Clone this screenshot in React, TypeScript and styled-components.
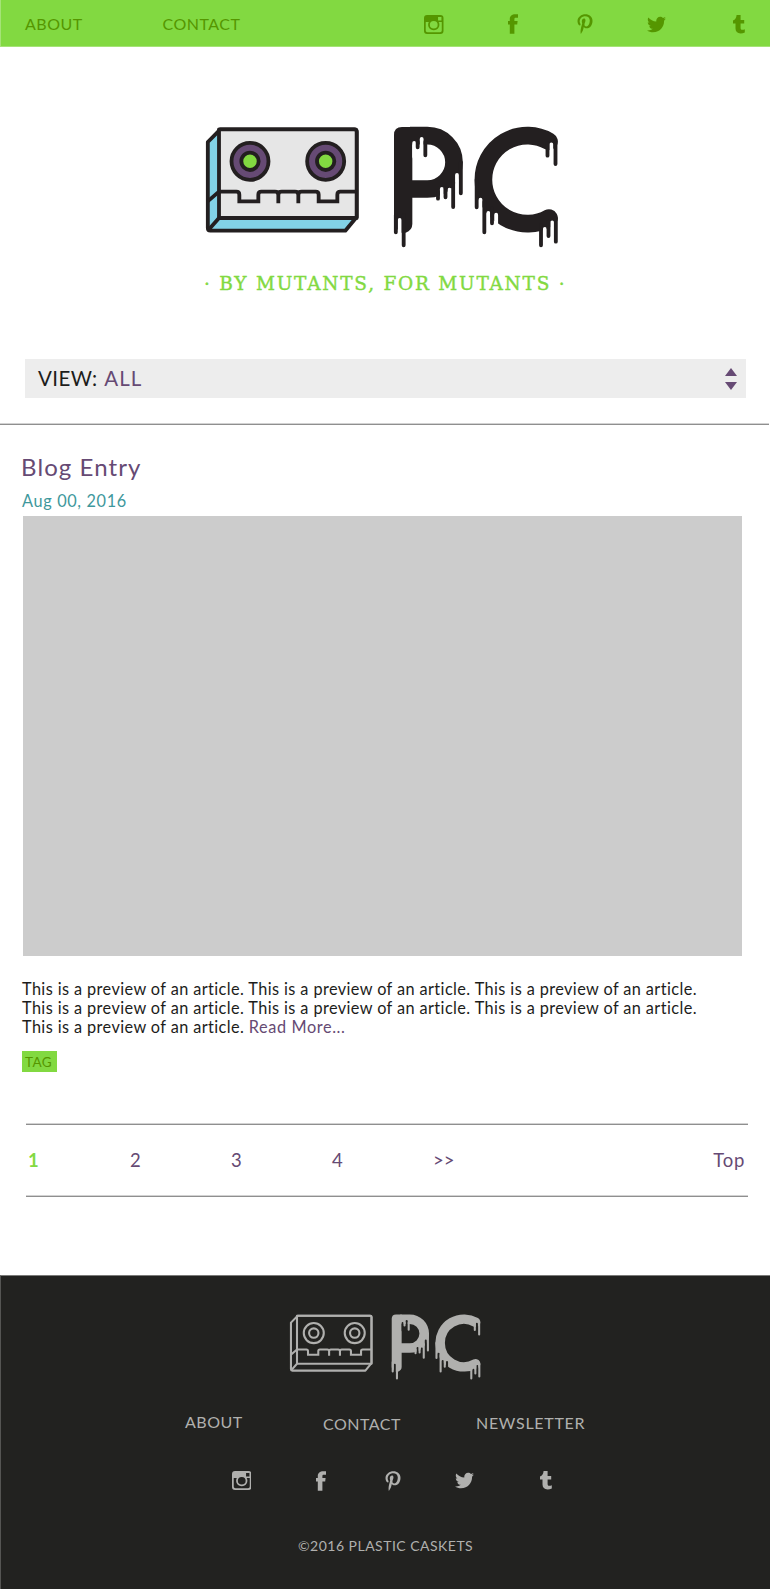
import React from "react";
import styled, { createGlobalStyle } from "styled-components";
import { FaPinterestP, FaTwitter } from "react-icons/fa";

const GlobalStyle = createGlobalStyle`
  * { box-sizing: border-box; }
  body { margin: 0; background: #fff; font-family: Lato, "Open Sans", sans-serif; color: #1d1d1b; }
  a { color: inherit; text-decoration: none; }
  p, h1, h2 { margin: 0; font-weight: 400; }
  svg { display: block; }
`;

const purple = "#664a74";
const green = "#82d941";
const leaf = "#559600";
const ink = "#231f20";
const coal = "#222220";
const ash = "#b0b0ae";

const Page = styled.div`
  width: 770px;
  height: 1589px;
  display: flex;
  flex-direction: column;
  overflow: hidden;
`;

const TopBar = styled.header`
  flex: none;
  height: 47px;
  padding: 2px 0 0 24px;
  display: flex;
  align-items: center;
  background: ${green};
  border-left: 1px solid #a5e377;
  border-bottom: 1px solid #a5e377;
  color: ${leaf};
`;

const NavLink = styled.a<{ $width: number; $drop?: number; $spacing?: number }>`
  width: ${(p) => p.$width}px;
  padding-top: ${(p) => p.$drop ?? 0}px;
  font-size: 16px;
  line-height: 20px;
  letter-spacing: ${(p) => p.$spacing ?? 0.5}px;
  white-space: nowrap;
`;

const SocialRow = styled.nav`
  display: flex;
  align-items: center;
  height: 20px;
`;

const SocialLink = styled.a<{ $gap: number }>`
  flex: none;
  margin-left: ${(p) => p.$gap}px;
`;

const Hero = styled.section`
  flex: none;
  height: 312px;
  padding: 68px 0 0 195px;
`;

const Tagline = styled.p`
  margin-top: 14px;
  margin-left: 9px;
  font-family: "DejaVu Serif", serif;
  font-size: 18.5px;
  line-height: 30px;
  letter-spacing: 1.77px;
  color: ${green};
  -webkit-text-stroke: 0.4px ${green};
  white-space: nowrap;
`;

const ViewSelect = styled.div`
  flex: none;
  width: 721px;
  height: 39px;
  margin-left: 25px;
  padding: 0 9px 0 13px;
  display: flex;
  align-items: center;
  justify-content: space-between;
  background: #ededed;
  font-size: 20.5px;
  line-height: 39px;
  letter-spacing: 0.4px;
`;

const Chosen = styled.span`
  margin-left: 1px;
  letter-spacing: 1px;
  color: ${purple};
`;

const Rule = styled.hr<{ $inset?: boolean }>`
  flex: none;
  width: ${(p) => (p.$inset ? "722px" : "769px")};
  height: 2px;
  margin: 0 0 0 ${(p) => (p.$inset ? 26 : 0)}px;
  border: 0;
  border-top: 1px solid #d2d2d2;
  background: #8f8f8f;
`;

const Article = styled.article`
  flex: none;
  height: 698px;
  padding: 26px 28px 0 22px;
`;

const Title = styled.h2`
  height: 36px;
  margin-left: -1px;
  font-size: 24px;
  line-height: 32px;
  letter-spacing: 1.1px;
  color: ${purple};
`;

const PostDate = styled.p`
  height: 29px;
  padding-top: 1px;
  font-size: 16.3px;
  line-height: 26px;
  letter-spacing: 0.65px;
  color: #3e989c;
`;

const Picture = styled.div`
  width: 719px;
  height: 440px;
  margin-left: 1px;
  background: #ccc;
`;

const Preview = styled.p`
  margin-top: 22.5px;
  font-size: 16.3px;
  line-height: 19.4px;
  letter-spacing: 0.4px;
  white-space: nowrap;
`;

const ReadMore = styled.a`
  && { color: ${purple}; }
  letter-spacing: 0.6px;
`;

const Tag = styled.span`
  display: block;
  width: 35px;
  height: 21px;
  margin-top: 14.5px;
  padding-left: 3px;
  background: ${green};
  color: ${leaf};
  font-size: 13.5px;
  line-height: 23px;
  letter-spacing: 0.4px;
`;

const Spacer = styled.div<{ $height: number }>`
  flex: none;
  height: ${(p) => p.$height}px;
`;

const Pager = styled.nav`
  flex: none;
  height: 70px;
  padding: 0 25px 0 28px;
  display: flex;
  align-items: center;
  font-size: 18.5px;
  line-height: 24px;
  color: ${purple};
`;

const PageLink = styled.a<{ $current?: boolean }>`
  width: ${(p) => (p.$current ? 102 : 101)}px;
  && { color: ${(p) => (p.$current ? green : purple)}; }
  font-weight: ${(p) => (p.$current ? 700 : 400)};
`;

const TopLink = styled.a`
  margin-left: auto;
  letter-spacing: 0.7px;
`;

const Footer = styled.footer`
  flex: 1;
  border-left: 1px solid #555553;
  border-top: 1px solid #7a7a78;
  background: ${coal};
  color: ${ash};
`;

const FooterLogo = styled.div`
  padding: 32px 0 0 283px;
`;

const FooterNav = styled.nav`
  display: flex;
  align-items: flex-start;
  height: 30px;
  margin: 28px 0 0 184px;
`;

const FooterSocial = styled.div`
  margin: 29px 0 0 231px;
`;

const Copyright = styled.p`
  margin: 43px 0 0 297px;
  font-size: 14px;
  line-height: 24px;
  letter-spacing: 0.48px;
  white-space: nowrap;
`;

/* Vertical strokes, each as [x, top, bottom]. */
type Drip = [number, number, number];

const hollows: Drip[] = [
  [102.5, 84, 125], [125, 72, 125],
  [231, 180, 275], [208.5, 224, 275], [185.5, 222, 270], [59, 315, 365],
  [514, 88, 130],
  [301.5, 254, 340], [325, 294, 350], [348.5, 299, 350],
  [516.5, 322, 370], [494.5, 342, 370],
];

const drips: Drip[] = [
  [113, 80, 97], [136, 80, 121],
  [242.5, 142, 235], [219.5, 200, 276], [196.5, 220, 247], [174, 230, 251],
  [47.5, 300, 352], [71, 300, 391],
  [502.5, 85, 122], [526.5, 80, 147],
  [290, 194, 277], [313, 260, 352], [336, 280, 325],
  [527.5, 310, 380], [505.5, 320, 363], [483, 330, 391],
];

const BrandMark = ({ width, colored }: { width: number; colored?: boolean }) => {
  const line = colored ? ink : ash;
  const ground = colored ? "#fff" : coal;
  const tint = (c: string) => (colored ? c : "none");
  return (
    <svg width={width} height={(width * 420) / 1125} viewBox="0 0 1125 420" fill="none" role="img" aria-label="Plastic Caskets">
      <g stroke={line} strokeWidth="11.5" strokeLinejoin="round">
        <path d="M38.5 81L76 43H478Q485 43 485 50V306L451 347H46Q38.5 347 38.5 339Z" fill={tint("#82d2e6")} />
        <path d="M72 43H478Q485 43 485 50V309H72Z" fill={tint("#e6e6e6")} />
        <path d="M72 309L41 344M38 259L72 230" />
        <path d="M72 230H124Q133 230 133 239V259H190V239Q190 230 199 230H240Q250 230 250 240V265M250 240Q250 230 260 230H300Q310 230 310 240V265M310 240Q310 230 320 230H362Q371 230 371 239V259H427V239Q427 230 436 230H485" strokeLinejoin="miter" />
        {[165, 392].map((cx) => (
          <g key={cx}>
            <circle cx={cx} cy="139" r="55.5" fill={tint("#664a74")} />
            <circle cx={cx} cy="139" r="26" fill={tint(green)} />
          </g>
        ))}
      </g>
      <g transform="translate(555 0)" stroke={line}>
        <path d="M42 330V60Q42 36 66 36H97V326Q97 346 77 353H60Z" fill={line} stroke="none" />
        <path d="M90 62H142A80 80 0 0 1 142 222H90" strokeWidth="53" />
        <path d="M507 79A132 132 0 1 0 507 309" strokeWidth="53" strokeLinecap="round" />
        <g strokeWidth="11.5" strokeLinecap="round">
          <path d={hollows.map(([x, a, b]) => `M${x} ${a}V${b}`).join("")} stroke={ground} />
          <path d={drips.map(([x, a, b]) => `M${x} ${a}V${b}`).join("")} />
        </g>
      </g>
    </svg>
  );
};

const CameraIcon = () => (
  <svg width="19.5" height="19" viewBox="0 0 19 19" preserveAspectRatio="none">
    <path
      fill="currentColor"
      fillRule="evenodd"
      d="M3 0H16Q19 0 19 3V16Q19 19 16 19H3Q0 19 0 16V3Q0 0 3 0ZM13.7 2V5.4H17V2ZM1.7 7V15.6Q1.7 17.3 3.4 17.3H15.6Q17.3 17.3 17.3 15.6V7H14.3A5.5 5.5 0 1 1 4.7 7ZM9.5 5.9A3.8 3.8 0 1 0 9.5 13.5A3.8 3.8 0 1 0 9.5 5.9Z"
    />
  </svg>
);

const FacebookIcon = () => (
  <svg width="10" height="20" viewBox="0 0 10 20">
    <path fill="currentColor" d="M10 .2H7.2C4 .2 1.8 2 1.8 4.8V7H0V10.6H1.8V19.8H6.4V10.6H9.2L9.6 7H6.4V5.4C6.4 4.2 6.8 3.8 7.9 3.8H10Z" />
  </svg>
);

const TumblrIcon = () => (
  <svg width="12" height="19" viewBox="0 0 12 19">
    <path fill="currentColor" d="M3.6 0H7.6V5H11.2V8.5H7.6V13C7.6 14.3 8.3 14.8 9.3 14.8C10.1 14.8 10.9 14.6 11.8 14.2V17.4C10.4 18.1 9 18.4 7.6 18.4C4.3 18.4 2.5 16.5 2.5 13.6V8.5H0V5.5C2.3 4.8 3.3 3 3.6 0Z" />
  </svg>
);

const Social = () => (
  <SocialRow>
    <SocialLink $gap={-0.5} href="#" aria-label="Instagram"><CameraIcon /></SocialLink>
    <SocialLink $gap={64.5} href="#" aria-label="Facebook"><FacebookIcon /></SocialLink>
    <SocialLink $gap={57} href="#" aria-label="Pinterest"><FaPinterestP size={20} /></SocialLink>
    <SocialLink $gap={52} href="#" aria-label="Twitter"><FaTwitter size={19} /></SocialLink>
    <SocialLink $gap={66.5} href="#" aria-label="Tumblr"><TumblrIcon /></SocialLink>
  </SocialRow>
);

const sentence = "This is a preview of an article.";
const fullLine = [sentence, sentence, sentence].join(" ");

export default function App() {
  return (
    <Page>
      <GlobalStyle />
      <TopBar>
        <NavLink $width={137.5} href="#">ABOUT</NavLink>
        <NavLink $width={262} href="#">CONTACT</NavLink>
        <Social />
      </TopBar>

      <Hero>
        <BrandMark width={375} colored />
        <Tagline>· BY MUTANTS, FOR MUTANTS ·</Tagline>
      </Hero>

      <ViewSelect>
        <span>VIEW: <Chosen>ALL</Chosen></span>
        <svg width="12" height="24" viewBox="0 0 12 24" fill={purple}>
          <path d="M6 1L12 9H0ZM0 15H12L6 23Z" />
        </svg>
      </ViewSelect>
      <Spacer $height={25} />
      <Rule />

      <Article>
        <Title>Blog Entry</Title>
        <PostDate>Aug 00, 2016</PostDate>
        <Picture />
        <Preview>
          {fullLine}<br />
          {fullLine}<br />
          {sentence} <ReadMore href="#">Read More...</ReadMore>
        </Preview>
        <Tag>TAG</Tag>
      </Article>

      <Rule $inset />
      <Pager>
        <PageLink $current href="#">1</PageLink>
        <PageLink href="#">2</PageLink>
        <PageLink href="#">3</PageLink>
        <PageLink href="#">4</PageLink>
        <PageLink href="#">&gt;&gt;</PageLink>
        <TopLink href="#">Top</TopLink>
      </Pager>
      <Rule $inset />
      <Spacer $height={78} />

      <Footer>
        <FooterLogo><BrandMark width={203} /></FooterLogo>
        <FooterNav>
          <NavLink $width={138} $drop={0} href="#">ABOUT</NavLink>
          <NavLink $width={153} $drop={2} href="#">CONTACT</NavLink>
          <NavLink $width={120} $drop={1} $spacing={0.7} href="#">NEWSLETTER</NavLink>
        </FooterNav>
        <FooterSocial><Social /></FooterSocial>
        <Copyright>©2016 PLASTIC CASKETS</Copyright>
      </Footer>
    </Page>
  );
}
